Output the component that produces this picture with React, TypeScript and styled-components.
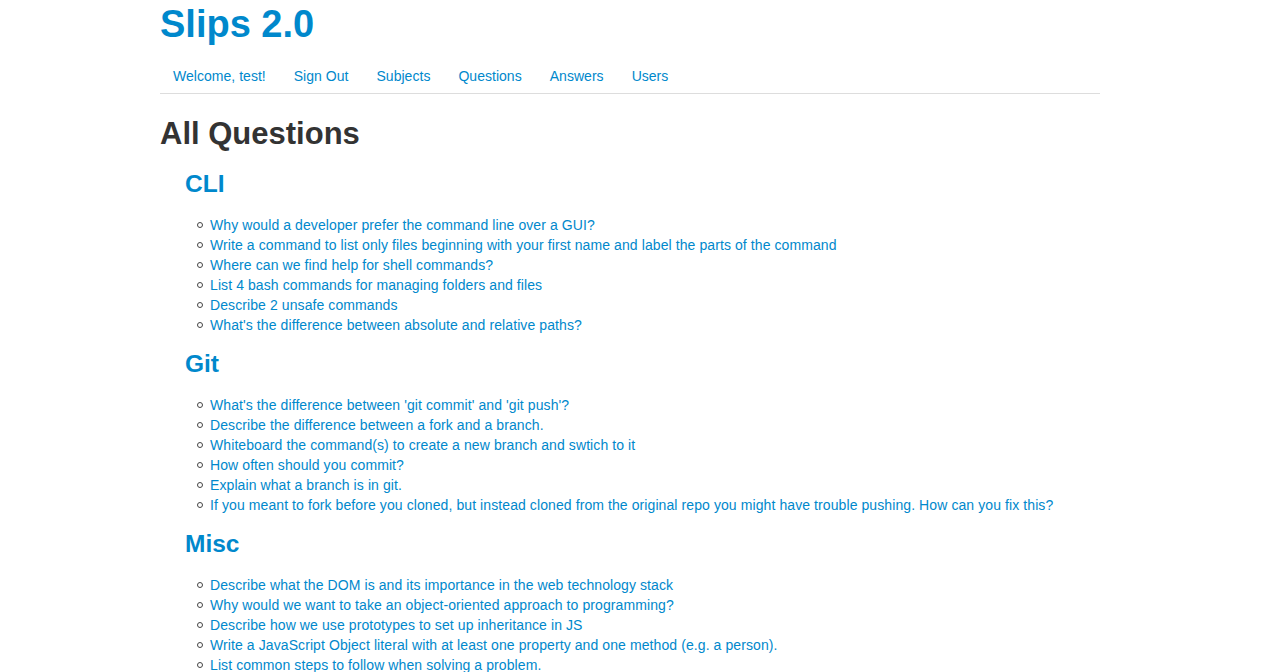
import React from "react";
import styled, { createGlobalStyle } from "styled-components";

const GlobalStyle = createGlobalStyle`
  html, body {
    margin: 0;
    padding: 0;
    overflow: hidden;
    background: #ffffff;
  }
  body {
    font-family: "Liberation Sans", Arial, Helvetica, sans-serif;
    font-size: 14px;
    line-height: 20px;
    color: #333333;
  }
`;

const Container = styled.div`
  width: 940px;
  margin-left: 160px;
`;

const Brand = styled.h1`
  margin: 4px 0 13px;
  font-size: 38px;
  line-height: 40px;
  font-weight: bold;
  a {
    color: #0088cc;
    text-decoration: none;
  }
`;

const Nav = styled.ul`
  display: flex;
  list-style: none;
  margin: 0 0 20px;
  padding: 0;
  border-bottom: 1px solid #dddddd;
`;

const NavItem = styled.li`
  margin: 0 2px -1px 0;
`;

const NavLink = styled.a`
  display: block;
  padding: 8px 12px 7px;
  line-height: 20px;
  border: 1px solid transparent;
  color: #0088cc;
  text-decoration: none;
  letter-spacing: 0.03px;
`;

const PageTitle = styled.h2`
  margin: 0 0 10px;
  font-size: 31px;
  line-height: 40px;
  font-weight: bold;
  color: #333333;
`;

const Subjects = styled.div`
  margin-left: 25px;
`;

const SubjectTitle = styled.h3`
  margin: 9px 0 11px;
  font-size: 24.5px;
  line-height: 40px;
  font-weight: bold;
  a {
    color: #0088cc;
    text-decoration: none;
  }
`;

const QuestionList = styled.ul`
  list-style: none;
  margin: 0 0 9px 25px;
  padding: 0;
`;

const Question = styled.li`
  position: relative;
  line-height: 20px;
  letter-spacing: 0.09px;
  &::before {
    content: "";
    position: absolute;
    left: -13px;
    top: 7px;
    width: 6px;
    height: 6px;
    box-sizing: border-box;
    border: 1px solid #444444;
    border-radius: 50%;
  }
  a {
    color: #0088cc;
    text-decoration: none;
  }
`;

const data: { subject: string; questions: string[] }[] = [
  {
    subject: "CLI",
    questions: [
      "Why would a developer prefer the command line over a GUI?",
      "Write a command to list only files beginning with your first name and label the parts of the command",
      "Where can we find help for shell commands?",
      "List 4 bash commands for managing folders and files",
      "Describe 2 unsafe commands",
      "What's the difference between absolute and relative paths?",
    ],
  },
  {
    subject: "Git",
    questions: [
      "What's the difference between 'git commit' and 'git push'?",
      "Describe the difference between a fork and a branch.",
      "Whiteboard the command(s) to create a new branch and swtich to it",
      "How often should you commit?",
      "Explain what a branch is in git.",
      "If you meant to fork before you cloned, but instead cloned from the original repo you might have trouble pushing. How can you fix this?",
    ],
  },
  {
    subject: "Misc",
    questions: [
      "Describe what the DOM is and its importance in the web technology stack",
      "Why would we want to take an object-oriented approach to programming?",
      "Describe how we use prototypes to set up inheritance in JS",
      "Write a JavaScript Object literal with at least one property and one method (e.g. a person).",
      "List common steps to follow when solving a problem.",
    ],
  },
];

const navItems = ["Welcome, test!", "Sign Out", "Subjects", "Questions", "Answers", "Users"];

export default function App() {
  return (
    <>
      <GlobalStyle />
      <Container>
        <Brand>
          <a href="#">Slips 2.0</a>
        </Brand>
        <Nav>
          {navItems.map((n) => (
            <NavItem key={n}>
              <NavLink href="#">{n}</NavLink>
            </NavItem>
          ))}
        </Nav>
        <PageTitle>All Questions</PageTitle>
        <Subjects>
          {data.map((s) => (
            <div key={s.subject}>
              <SubjectTitle>
                <a href="#">{s.subject}</a>
              </SubjectTitle>
              <QuestionList>
                {s.questions.map((q) => (
                  <Question key={q}>
                    <a href="#">{q}</a>
                  </Question>
                ))}
              </QuestionList>
            </div>
          ))}
        </Subjects>
      </Container>
    </>
  );
}
